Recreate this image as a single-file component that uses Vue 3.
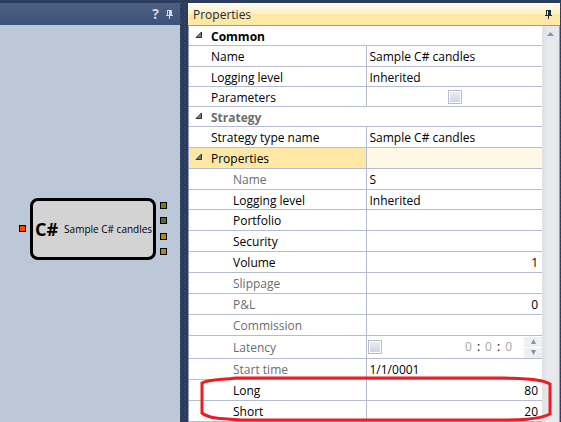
<script setup>
const rows = [
  { label: 'Common', kind: 'category', size: 'short' },
  { label: 'Name', value: 'Sample C# candles' },
  { label: 'Logging level', value: 'Inherited', size: 'short' },
  { label: 'Parameters', kind: 'check', size: 'short' },
  { label: 'Strategy', kind: 'category', size: 'short', muted: true },
  { label: 'Strategy type name', value: 'Sample C# candles' },
  { label: 'Properties', kind: 'group' },
  { label: 'Name', value: 'S', nested: true, muted: true },
  { label: 'Logging level', value: 'Inherited', nested: true, size: 'short' },
  { label: 'Portfolio', nested: true },
  { label: 'Security', nested: true },
  { label: 'Volume', value: '1', nested: true, numeric: true },
  { label: 'Slippage', nested: true, muted: true },
  { label: 'P&L', value: '0', nested: true, muted: true, numeric: true },
  { label: 'Commission', nested: true, muted: true },
  { label: 'Latency', kind: 'time', nested: true, muted: true, size: 'tall' },
  { label: 'Start time', value: '1/1/0001', nested: true, muted: true },
  { label: 'Long', value: '80', nested: true, numeric: true },
  { label: 'Short', value: '20', nested: true, numeric: true },
]
const outputs = ['olive', 'green', 'gold', 'gold']
</script>

<template>
  <main class="workspace">
    <section class="designer">
      <header class="bar bar-dark">
        <button class="tool help" type="button" aria-label="Help">?</button>
        <button class="tool" type="button" aria-label="Pin designer">
          <svg width="7" height="9" viewBox="0 0 7 9" shape-rendering="crispEdges" fill="currentColor">
            <path d="M1 0h5v5h1v1H4v3H3V6H0V5h1zM2 1v4h1V1z" fill-rule="evenodd" />
          </svg>
        </button>
      </header>
      <div class="canvas">
        <div class="node">
          <span class="port port-in"></span>
          <span class="node-logo">C#</span>
          <span class="node-title">Sample C# candles</span>
          <span v-for="(color, i) in outputs" :key="i" class="port port-out" :class="[color, 'out-' + i]"></span>
        </div>
      </div>
    </section>

    <section class="properties">
      <header class="bar bar-light">
        <h1>Properties</h1>
        <button class="tool" type="button" aria-label="Pin properties">
          <svg width="7" height="9" viewBox="0 0 7 9" shape-rendering="crispEdges" fill="currentColor">
            <path d="M1 0h5v5h1v1H4v3H3V6H0V5h1zM2 1v4h1V1z" fill-rule="evenodd" />
          </svg>
        </button>
      </header>
      <div class="body">
        <table>
          <colgroup><col class="col-label" /><col /></colgroup>
          <tbody>
            <tr v-for="(row, i) in rows" :key="i" :class="[row.size, row.kind && 'row-' + row.kind, { muted: row.muted, nested: row.nested }]">
              <th scope="row" :colspan="row.kind === 'category' ? 2 : 1">
                <div class="label">
                  <svg v-if="row.kind === 'category' || row.kind === 'group'" class="arrow" width="8" height="8" viewBox="0 0 8 8">
                    <path d="M6.500 1v5.500H1z" fill="#808080" stroke="#303030" />
                  </svg>
                  <label v-if="row.kind === 'check' || row.kind === 'time'" :for="'field-' + i">{{ row.label }}</label>
                  <span v-else>{{ row.label }}</span>
                </div>
              </th>
              <td v-if="row.kind !== 'category'" :class="{ numeric: row.numeric }">
                <div v-if="row.kind === 'check'" class="centered">
                  <input :id="'field-' + i" type="checkbox" />
                </div>
                <div v-else-if="row.kind === 'time'" class="time">
                  <input :id="'field-' + i" type="checkbox" />
                  <span class="clock"><i>0</i><b>:</b><i>0</i><b>:</b><i>0</i></span>
                  <span class="spinner">
                    <button type="button" aria-label="Increase">
                      <svg width="5" height="5" viewBox="0 0 5 5"><path d="M2.500 0L5 5H0z" /></svg>
                    </button>
                    <button type="button" aria-label="Decrease">
                      <svg width="5" height="5" viewBox="0 0 5 5"><path d="M0 0h5L2.500 5z" /></svg>
                    </button>
                  </span>
                </div>
                <template v-else>{{ row.value }}</template>
              </td>
            </tr>
          </tbody>
        </table>
        <div class="scrollbar">
          <button type="button" aria-label="Scroll up">
            <svg width="7" height="4" viewBox="0 0 7 4"><path d="M3.500 0L7 4H0z" fill="#8492b0" /></svg>
          </button>
        </div>
        <svg class="highlight" viewBox="0 0 352 46" preserveAspectRatio="none">
          <path d="M36 2H304C326 3 341 3 350 8V38C338 44 318 44 296 44H44C24 43 9 43 2 37V7C10 3 22 4 36 2Z" />
        </svg>
      </div>
    </section>
  </main>
</template>

<style>
body {
  margin: 0;
}
</style>

<style scoped>
* {
  box-sizing: border-box;
}
.workspace {
  display: grid;
  grid-template-columns: 180px minmax(0, 1fr);
  column-gap: 8px;
  min-height: 100vh;
  padding: 3px 1px 0 0;
  overflow: hidden;
  font: 12px/16px "Open Sans", "Noto Sans", sans-serif;
  color: #000;
  background-color: #2b3c5a;
  background-image:
    linear-gradient(45deg, #33476a 25%, transparent 25%, transparent 75%, #33476a 75%);
  background-size: 4px 4px;
}
button {
  display: flex;
  align-items: center;
  justify-content: center;
  padding: 0;
  border: 0;
  background: none;
  color: inherit;
  font: inherit;
}
.bar {
  display: flex;
  align-items: center;
  height: 22px;
}
.bar-dark {
  justify-content: flex-end;
  gap: 7px;
  padding-right: 7px;
  color: #d3dbe8;
  background: linear-gradient(#4d6082, #3d5277);
}
.tool.help {
  font-size: 14px;
  font-weight: 700;
}
.bar-light {
  justify-content: space-between;
  padding: 0 8px 0 5px;
  color: #1c2a3e;
  background: linear-gradient(#fffcf2, #fff0c4 48%, #ffe8a6 52%, #ffe8a6);
}
h1 {
  margin: 0;
  padding-top: 2px;
  font-size: 12px;
  font-weight: 400;
}
.designer {
  display: flex;
  flex-direction: column;
}
.canvas {
  flex: 1;
  padding: 173px 24px 0 30px;
  background: #bcc7d8;
}
.node {
  position: relative;
  display: flex;
  align-items: center;
  gap: 6px;
  height: 62px;
  padding: 0 0 0 2px;
  border: 3px solid #000;
  border-radius: 8px;
  background: #d3d3d3;
  white-space: nowrap;
}
.node-logo {
  font-size: 18px;
  font-weight: 700;
}
.node-title {
  font-size: 10px;
}
.port {
  position: absolute;
  width: 7px;
  height: 7px;
  border: 1px solid #000;
}
.port-in {
  top: 24px;
  left: -14px;
  background: #ff4500;
}
.port-out {
  right: -14px;
}
.out-0 { top: 1px; }
.out-1 { top: 16px; }
.out-2 { top: 32px; }
.out-3 { top: 47px; }
.olive { background: #808000; }
.green { background: #556b2f; }
.gold { background: #b8860b; }
.body {
  position: relative;
  display: grid;
  grid-template-columns: minmax(0, 1fr) 17px;
  border: 1px solid #8e9bbc;
  border-bottom: 0;
  background: #fff;
}
table {
  width: 100%;
  table-layout: fixed;
  border-collapse: separate;
  border-spacing: 0;
}
.col-label {
  width: 50%;
}
tr {
  height: 21px;
}
.short {
  height: 20px;
}
.tall {
  height: 23px;
}
th,
td {
  padding: 2px 0 0;
  border-bottom: 1px solid #b5bccd;
  font-weight: 400;
  text-align: left;
  vertical-align: middle;
  white-space: nowrap;
}
th {
  padding-left: 6px;
}
td {
  padding-left: 3px;
  border-left: 1px solid #b5bccd;
}
.label {
  display: flex;
  padding-left: 16px;
}
.nested .label {
  padding-left: 38px;
}
.row-category .label,
.row-group .label {
  gap: 8px;
  padding-left: 0;
}
.arrow {
  margin-top: 2px;
}
.muted th {
  color: #6d6d6d;
}
.row-category th {
  font-weight: 700;
}
.row-group th {
  background: #ffe8a6;
}
.row-group td {
  background: #fff8e7;
}
.numeric {
  padding-right: 4px;
  text-align: right;
}
.row-check td,
.row-time td {
  padding: 0 0 0 1px;
}
input {
  appearance: none;
  width: 14px;
  height: 14px;
  margin: 0;
  border: 1px solid #b5bccd;
  background: linear-gradient(#eceef3, #cdd2de);
  box-shadow: inset 0 0 0 1px #fff;
}
.centered {
  display: flex;
  justify-content: center;
}
.time {
  display: flex;
  align-items: center;
  height: 22px;
}
.time input {
  margin-right: auto;
}
.clock {
  display: flex;
  gap: 5px;
  margin-right: 12px;
}
.clock i {
  color: #a8a8a8;
  font-style: normal;
}
.clock b {
  font-weight: 400;
}
.spinner {
  display: grid;
  gap: 1px;
  width: 18px;
}
.spinner button {
  height: 10px;
  background: #eeeff2;
}
.spinner path {
  fill: #8a8f9c;
}
.scrollbar {
  background: linear-gradient(90deg, #dfe0e4, #e8e9ec 40%, #e6e7ea);
}
.scrollbar button {
  width: 100%;
  height: 16px;
}
.highlight {
  position: absolute;
  bottom: 0;
  left: 11px;
  width: calc(100% - 18px);
  height: 46px;
  fill: none;
  stroke: #ed1c24;
  stroke-width: 3;
  pointer-events: none;
}
</style>
